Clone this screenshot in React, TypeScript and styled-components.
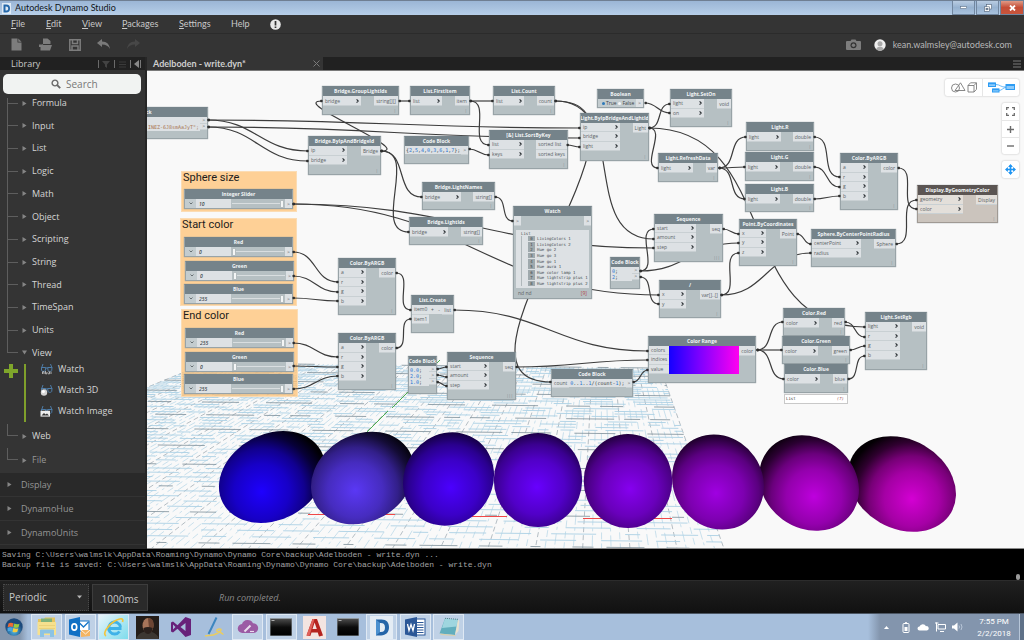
import React from "react";
import styled, { createGlobalStyle, css } from "styled-components";

const GlobalStyle = createGlobalStyle`
  * { box-sizing: border-box; }
  html, body { margin: 0; background: #000; }
  body { font-family: "Open Sans", "Noto Sans", sans-serif; color: #c8c8c8; overflow: hidden; }
  button, input, select { font: inherit; color: inherit; margin: 0; padding: 0; border: 0; background: none; border-radius: 0; }
  a { color: inherit; text-decoration: none; }
  ul { list-style: none; margin: 0; padding: 0; }
  svg { display: block; }
`;

/* ------------------------------------------------------------ shell */

const Shell = styled.div`
  display: flex;
  flex-direction: column;
  height: 100vh;
`;

const TitleBar = styled.header`
  display: flex;
  align-items: center;
  height: 15px;
  padding-left: 2px;
  border-top: 1px solid #6f7f93;
  background: linear-gradient(#9bb6d6, #b6cee8);
`;

const AppTitle = styled.h1`
  flex: 1;
  margin: 0 0 0 4px;
  font: 400 9px/14px Lato, sans-serif;
  color: #101418;
`;

const WindowButton = styled.button<{ $close?: boolean }>`
  display: grid;
  place-items: center;
  align-self: stretch;
  width: ${(p) => (p.$close ? 24 : 23)}px;
  border: 1px solid #71869f;
  border-top: 0;
  margin-left: 1px;
  background: ${(p) =>
    p.$close ? "linear-gradient(#e09a86, #c44d36 50%, #c8553c)" : "linear-gradient(#b9cce2, #97b2d0 50%, #a9c2de)"};
`;

const MenuBar = styled.nav`
  display: flex;
  align-items: center;
  height: 18px;
  padding-left: 11px;
  background: #343434;
  font: 9px Lato, "Open Sans", sans-serif;
`;

const MenuItem = styled.button<{ $w: number }>`
  width: ${(p) => p.$w}px;
  height: 18px;
  text-align: left;
  line-height: 16px;
`;

const ToolBar = styled.div`
  display: flex;
  align-items: center;
  gap: 8px;
  height: 24px;
  padding: 0 12px 2px 6px;
  background: #343434;
  border-top: 1px solid #2b2b2b;
`;

const ToolButton = styled.button`
  display: grid;
  place-items: center;
  width: 21px;
  height: 20px;
`;

const Spacer = styled.div`
  flex: 1;
`;

const Account = styled.a`
  display: flex;
  align-items: center;
  gap: 7px;
  margin-left: 2px;
  font: 9px Lato, "Open Sans", sans-serif;
  color: #b8b8b8;
`;

const Main = styled.main`
  display: grid;
  grid-template-columns: 147px minmax(0, 1fr);
  flex: 1;
  min-height: 0;
`;

/* ---------------------------------------------------------- library */

const Sidebar = styled.aside`
  display: flex;
  flex-direction: column;
  min-height: 0;
  overflow: hidden;
  background: #343434;
  border-right: 2px solid #262626;
  font-size: 9px;
`;

const LibraryHeader = styled.div`
  display: flex;
  align-items: center;
  gap: 4px;
  height: 13px;
  padding: 0 3px 0 11px;
  background: #212121;
`;

const LibraryTitle = styled.h2`
  flex: 1;
  margin: 0;
  font-size: 9px;
  font-weight: 400;
  line-height: 12px;
`;

const HeaderButton = styled.button`
  display: grid;
  place-items: center;
  height: 9px;
`;

const SearchLabel = styled.label`
  display: flex;
  align-items: center;
  gap: 5px;
  height: 20px;
  margin: 4px 4px 2px 3px;
  padding-left: 48px;
  border-radius: 5px;
  background: #f1f3f2;
  color: #6b6b6b;
`;

const SearchInput = styled.input`
  width: 60px;
  font-size: 10px;
  outline: none;
  &::placeholder { color: #777; opacity: 1; }
`;

const Tree = styled.ul`
  position: relative;
  display: flex;
  flex-direction: column;
  justify-content: space-between;
  height: 264px;
  &::before {
    content: "";
    position: absolute;
    left: 7px;
    top: 2px;
    bottom: 7px;
    border-left: 1px solid #5e5e5e;
  }
`;

const TreeItem = styled.li`
  display: flex;
  align-items: center;
  height: 14px;
  padding-left: 8px;
`;

const Tick = styled.span`
  width: 10px;
  height: 1px;
  margin-right: 4px;
  background: #5e5e5e;
`;

const TreeButton = styled.button<{ $dim?: boolean }>`
  display: flex;
  align-items: center;
  gap: 5px;
  line-height: 14px;
  color: ${(p) => (p.$dim ? "#969696" : "#d4d4d4")};
`;

const Leaves = styled.div`
  display: flex;
  gap: 6px;
  padding-left: 4px;
`;

const LeafList = styled.ul`
  flex: 1;
  border-left: 2px solid #7f9f2b;
  margin: 4px 0 0 0;
  height: 58px;
`;

const Leaf = styled.li`
  display: flex;
  align-items: center;
  height: 21px;
  padding-left: 14px;
`;

const LeafButton = styled.button`
  display: flex;
  align-items: center;
  gap: 5px;
  line-height: 14px;
  color: #d4d4d4;
  margin-top: -12px;
`;

const Stub = styled.div`
  display: flex;
  align-items: flex-end;
  height: 24px;
  padding: 0 0 3px 7px;
`;

const Elbow = styled.span`
  width: 11px;
  height: 12px;
  margin: 0 4px 7px 0;
  border: solid #5e5e5e;
  border-width: 0 0 1px 1px;
`;

const Packages = styled.ul`
  flex: 1;
  margin-top: 3px;
  background: #292929;
`;

const PackageItem = styled.li`
  display: flex;
  align-items: center;
  height: 24px;
  padding-left: 7px;
  border-bottom: 1px solid #333;
  button { gap: 9px; }
`;

/* -------------------------------------------------------- workspace */

const WorkArea = styled.section`
  display: flex;
  flex-direction: column;
  min-width: 0;
  min-height: 0;
`;

const TabBar = styled.div`
  display: flex;
  align-items: center;
  height: 14px;
  border-bottom: 1px solid #7a7a7a;
  background: #212121;
`;

const Tab = styled.div`
  display: flex;
  align-items: center;
  justify-content: space-between;
  width: 176px;
  height: 13px;
  padding: 0 3px 0 6px;
  background: #343434;
  font: 700 9px/12px Lato, "Open Sans", sans-serif;
  color: #cfcfcf;
`;

const TabMenu = styled.button`
  margin: 0 3px 0 auto;
`;

const Canvas = styled.div`
  position: relative;
  flex: 1;
  overflow: hidden;
  background: #f9f9f9;
  border-bottom: 1px solid #8a8a8a;
`;

const Plane = styled.div`
  position: absolute;
  left: 0;
  top: 0;
  width: 1024px;
  height: 640px;
  transform: translate(-147px, -71px);
  font-size: 5px;
  line-height: 8px;
  color: #5a6165;
`;

const Backdrop = styled.svg`
  position: absolute;
  left: 0;
  top: 0;
`;

type Box = { $x: number; $y: number; $w: number; $h: number };

const placed = css<Box>`
  position: absolute;
  left: ${(p) => p.$x}px;
  top: ${(p) => p.$y}px;
  width: ${(p) => p.$w}px;
  height: ${(p) => p.$h}px;
`;

const GroupBox = styled.section<Box>`
  ${placed}
  border: 1px solid #fbdcb4;
  background: rgba(255, 196, 122, 0.78);
`;

const GroupTitle = styled.h3`
  margin: 0;
  padding-left: 1px;
  font: 400 11px/11px Roboto, sans-serif;
  color: #1c1c1c;
`;

const NodeBox = styled.article<Box & { $warm?: boolean }>`
  ${placed}
  display: flex;
  flex-direction: column;
  overflow: hidden;
  border: 1px solid ${(p) => (p.$warm ? "#a09a94" : "#98a3a7")};
  border-top-color: ${(p) => (p.$warm ? "#5b5553" : "#75838a")};
  background: ${(p) => (p.$warm ? "#cbc4bd" : "#b6c0c3")};
  box-shadow: 0 0 1px #8b969a;
  --cell: ${(p) => (p.$warm ? "#e3dfda" : "#dde1e4")};
  --head: ${(p) => (p.$warm ? "#5b5553" : "#75838a")};
`;

const NodeTitle = styled.h4`
  display: flex;
  justify-content: center;
  flex: none;
  height: 9px;
  margin: 0;
  background: var(--head);
  color: #f2f5f6;
  font-size: 5px;
  font-weight: 700;
  line-height: 8px;
  white-space: nowrap;
`;

const Body = styled.div`
  display: flex;
  justify-content: space-between;
  align-items: flex-start;
  flex: 1;
`;

const Inputs = styled.ul<{ $w?: number; $h: number }>`
  display: flex;
  flex-direction: column;
  width: ${(p) => (p.$w ? `${p.$w}px` : "auto")};
  height: ${(p) => p.$h}px;
`;

const Outputs = styled(Inputs)`
  text-align: right;
`;

const Port = styled.li`
  display: flex;
  justify-content: space-between;
  align-items: center;
  flex: 1;
  min-height: 0;
  padding: 0 2px;
  background: var(--cell);
  border-bottom: 1px solid #c9d0d3;
  white-space: nowrap;
  line-height: 6px;
`;

const Lacing = styled.span`
  position: absolute;
  right: 2px;
  bottom: 1px;
  font-size: 4px;
  line-height: 5px;
  color: #7d888c;
`;

const Code = styled.pre<{ $tone?: string }>`
  flex: 1;
  margin: 0;
  padding: 1px;
  background: var(--cell);
  font: 5px/6px "DejaVu Sans Mono", monospace;
  color: ${(p) => p.$tone ?? "#383e41"};
  text-align: ${(p) => (p.$tone ? "right" : "left")};
`;

const Num = styled.span`
  color: #1f74d2;
`;

const SliderRow = styled.div`
  display: grid;
  grid-template-columns: 11px 35px 1fr 7px;
  flex: 1;
`;

const Cell = styled.div`
  display: grid;
  place-items: center;
  background: var(--cell);
`;

const ArrowButton = styled.button`
  display: grid;
  place-items: center;
  background: #c3cccf;
`;

const ValueInput = styled.input`
  min-width: 0;
  padding-left: 3px;
  background: var(--cell);
  font-size: 5px;
  font-style: italic;
  font-weight: 600;
  color: #40474a;
`;

const Range = styled.input`
  appearance: none;
  align-self: center;
  min-width: 0;
  height: 8px;
  margin: 0 1px;
  background: linear-gradient(#d9dee0, #d9dee0) center / 100% 1px no-repeat;
  &::-webkit-slider-thumb {
    appearance: none;
    width: 4px;
    height: 8px;
    background: #f4f6f6;
    border: 1px solid #b4bcbf;
  }
`;

const Radio = styled.input`
  appearance: none;
  width: 3px;
  height: 3px;
  margin: 0 1px 0 0;
  border-radius: 50%;
  background: #f5f7f8;
  &:checked { background: #2d78b8; }
`;

const BooleanRow = styled.div`
  display: flex;
  align-items: center;
  justify-content: space-between;
  flex: 1;
  padding-left: 4px;
  background: #c3cccf;
  label { display: flex; align-items: center; color: #3c4346; }
  ${Cell} { width: 7px; height: 8px; }
`;

const SmallButton = styled.button`
  width: 8px;
  height: 9px;
  background: var(--cell);
  line-height: 8px;
`;

const Swatch = styled.div`
  flex: 1;
  height: 28px;
  background: linear-gradient(90deg, #1400ff, #8000ff 45%, #ff00f0);
`;

const WatchPanel = styled.div`
  margin: 1px 2px 0;
  height: 58px;
  padding: 1px 0 0 5px;
  background: var(--cell);
  font: 4px/5px "DejaVu Sans Mono", monospace;
  color: #464d51;
`;

const WatchList = styled.ul`
  display: flex;
  flex-direction: column;
  justify-content: space-between;
  height: 50px;
  padding-left: 6px;
  border-left: 1px solid #b0b8bb;
`;

const WatchItem = styled.li`
  display: flex;
  gap: 2px;
  white-space: nowrap;
  b { font-weight: 400; background: #9fa9ad; color: #3f474a; height: 5px; width: 7px; text-align: center; }
`;

const WatchFooter = styled.div`
  display: flex;
  justify-content: space-between;
  padding: 2px 4px;
  line-height: 6px;
  em { font-style: normal; color: #b0474a; }
`;

const Preview = styled.div<Box>`
  ${placed}
  display: flex;
  justify-content: space-between;
  padding: 0 3px 0 1px;
  border: 1px solid #c9c9c9;
  background: #fff;
  font: 4px/8px "DejaVu Sans Mono", monospace;
  color: #333;
  em { color: #a05a5a; }
`;

const ViewTools = styled.div`
  position: absolute;
  top: 8px;
  right: 5px;
  display: flex;
  flex-direction: column;
  align-items: flex-end;
  gap: 7px;
`;

const ToolCard = styled.div<{ $row?: boolean }>`
  display: flex;
  flex-direction: ${(p) => (p.$row ? "row" : "column")};
  border-radius: 2px;
  background: #fff;
  box-shadow: 0 0 2px #b5b5b5;
  & > * + * { border-${(p) => (p.$row ? "left" : "top")}: 1px solid #e6e6e6; }
`;

const ViewButton = styled.button<{ $wide?: boolean }>`
  display: grid;
  place-items: center;
  width: ${(p) => (p.$wide ? 37 : 17)}px;
  height: 17px;
`;

/* -------------------------------------------------------- bottom bars */

const Console = styled.section`
  position: relative;
  height: 31px;
  padding: 1px 2px;
  background: #000;
  font: 8px/10px "Liberation Mono", monospace;
  color: #a4a4a4;
  white-space: nowrap;
  p { margin: 0; }
`;

const Grip = styled.span`
  position: absolute;
  right: 4px;
  bottom: 0;
  width: 4px;
  height: 6px;
  border-radius: 2px;
  background: #9a9a9a;
`;

const RunBar = styled.footer`
  display: flex;
  align-items: center;
  gap: 4px;
  height: 34px;
  padding-left: 3px;
  border-top: 1px solid #2c2c2c;
  border-bottom: 1px solid #4b5562;
  background: linear-gradient(#202020, #111);
  font-size: 10px;
`;

const SelectWrap = styled.label`
  position: relative;
  svg { position: absolute; right: 7px; top: 11px; pointer-events: none; }
`;

const RunMode = styled.select`
  appearance: none;
  width: 86px;
  height: 27px;
  padding-left: 5px;
  border: 1px dotted #4a4a4a;
  background: #2a2a2a;
`;

const Interval = styled.button`
  width: 56px;
  height: 27px;
  padding-top: 3px;
  border: 1px solid #3d3d3d;
  background: #2a2a2a;
  margin-left: -1px;
`;

const RunStatus = styled.output`
  margin-left: 67px;
  font-size: 9px;
  font-style: italic;
  color: #8a8a8a;
`;

const TaskBar = styled.nav`
  display: flex;
  height: 26px;
  background: #a7bfdc;
`;

const StartButton = styled.button`
  display: grid;
  place-items: center;
  width: 28px;
  margin-right: 3px;
  background: linear-gradient(90deg, #8496ad 70%, #a7bfdc);
`;

const Dock = styled.div`
  display: flex;
  justify-content: space-between;
  width: 433px;
`;

const DockItem = styled.button<{ $open?: boolean; $active?: boolean }>`
  display: grid;
  place-items: center;
  width: 31px;
  height: 26px;
  border: 1px solid ${(p) => (p.$open ? "#dfe9f4" : "transparent")};
  background: ${(p) => (p.$active ? "linear-gradient(135deg,#e8f4fb,#7fdcec)" : p.$open ? "#bfd1e6" : "none")};
`;

const Tray = styled.div`
  display: flex;
  align-items: center;
  gap: 5px;
  margin-left: auto;
  padding-left: 12px;
  background: linear-gradient(90deg, #a7bfdc, #8395ad 12px);
  color: #fff;
  font: 8px/12px Roboto, sans-serif;
  text-align: center;
`;

const TrayButton = styled.button`
  display: grid;
  place-items: center;
  width: 12px;
  &:first-child { margin-right: 3px; }
`;

const Clock = styled.time`
  width: 40px;
  margin: 1px 0 0 6px;
`;

const ShowDesktop = styled.button`
  align-self: stretch;
  width: 5px;
  background: #5f7188;
  border-left: 1px solid #b7c6d8;
`;

/* --------------------------------------------------------------- data */

type NodeData = {
  x: number; y: number; w: number; h: number; title: string;
  inputs: string[]; inW: number; outputs: string[]; lacing?: string; warm?: boolean;
};

const n = (
  title: string, x: number, y: number, w: number, h: number,
  inputs: string[], inW: number, outputs: string[], extra: Partial<NodeData> = {}
): NodeData => ({ title, x, y, w, h, inputs, inW, outputs, ...extra });

const nodes: NodeData[] = [
  n("Bridge.GroupLightIds", 322, 86, 77, 29, ["bridge"], 38, ["string[][]"]),
  n("List.FirstItem", 410, 86, 60, 29, ["list"], 31, ["item"]),
  n("List.Count", 493, 86, 62, 29, ["list"], 30, ["count"]),
  n("Bridge.ByIpAndBridgeId", 308, 136, 73, 39, ["ip", "bridge"], 38, ["Bridge"]),
  n("[&] List.SortByKey", 489, 130, 79, 39, ["list", "keys"], 34, ["sorted list", "sorted keys"]),
  n("Light.ByIpBridgeAndLightId", 580, 113, 69, 48, ["ip", "bridge", "light"], 39, ["Light"]),
  n("Light.SetOn", 670, 89, 62, 38, ["light", "on"], 33, ["void"]),
  n("Light.RefreshData", 658, 153, 60, 29, ["light"], 34, ["var"]),
  n("Light.R", 746, 122, 68, 29, ["light"], 34, ["double"]),
  n("Light.G", 745, 152, 69, 29, ["light"], 34, ["double"]),
  n("Light.B", 745, 184, 69, 28, ["light"], 34, ["double"]),
  n("Color.ByARGB", 840, 153, 58, 57, ["a", "r", "g", "b"], 27, ["color"]),
  n("Display.ByGeometryColor", 917, 185, 81, 38, ["geometry", "color"], 45, ["Display"], { warm: true }),
  n("Bridge.LightNames", 422, 182, 73, 28, ["bridge"], 38, ["string[]"]),
  n("Bridge.LightIds", 409, 217, 74, 28, ["bridge"], 38, ["string[]"]),
  n("Sequence", 654, 214, 69, 48, ["start", "amount", "step"], 41, ["seq"], { lacing: "|||" }),
  n("Point.ByCoordinates", 739, 219, 58, 47, ["x", "y", "z"], 26, ["Point"]),
  n("Sphere.ByCenterPointRadius", 811, 229, 85, 38, ["centerPoint", "radius"], 49, ["Sphere"]),
  n("/", 659, 280, 62, 38, ["x", "y"], 26, ["var[]..[]"]),
  n("Color.ByARGB", 338, 258, 58, 57, ["a", "r", "g", "b"], 27, ["color"]),
  n("Color.ByARGB", 338, 333, 58, 57, ["a", "r", "g", "b"], 27, ["color"]),
  n("Sequence", 447, 352, 69, 48, ["start", "amount", "step"], 41, ["seq"], { lacing: "|||" }),
  n("Color.Red", 783, 308, 62, 28, ["color"], 35, ["red"]),
  n("Color.Green", 782, 336, 68, 28, ["color"], 35, ["green"]),
  n("Color.Blue", 784, 364, 64, 29, ["color"], 35, ["blue"]),
  n("Light.SetRgb", 865, 312, 62, 58, ["light", "r", "g", "b"], 34, ["void"]),
];

const wires: [number, number, number, number][] = [
  [208, 120, 580, 128], [208, 120, 308, 151], [208, 127, 580, 138], [208, 127, 308, 161],
  [381, 151, 322, 101], [381, 151, 422, 197], [381, 151, 409, 232],
  [399, 101, 410, 101], [470, 101, 493, 101], [470, 101, 489, 145], [469, 149, 489, 155],
  [567, 145, 580, 147], [555, 101, 654, 239], [555, 101, 551, 382], [495, 197, 513, 221],
  [645, 103, 670, 113], [649, 128, 670, 104], [649, 128, 658, 168], [649, 128, 865, 327],
  [719, 168, 746, 137], [719, 168, 745, 167], [719, 168, 745, 199],
  [814, 137, 840, 177], [814, 167, 840, 187], [814, 199, 840, 196],
  [898, 168, 917, 209], [896, 244, 917, 200], [723, 229, 739, 234], [797, 234, 811, 244],
  [293, 204, 654, 248], [293, 204, 659, 295], [640, 271, 654, 229], [640, 271, 739, 243],
  [640, 277, 659, 304], [721, 295, 739, 253], [721, 295, 811, 253],
  [293, 252, 338, 282], [293, 276, 338, 292], [293, 298, 338, 301],
  [293, 343, 338, 357], [293, 366, 338, 367], [293, 389, 338, 376],
  [396, 273, 411, 310], [396, 348, 411, 319], [454, 310, 648, 351],
  [437, 369, 447, 367], [437, 375, 447, 377], [437, 382, 447, 386],
  [516, 367, 648, 360], [633, 382, 648, 370],
  [757, 350, 783, 322], [757, 350, 782, 350], [757, 350, 784, 379],
  [845, 322, 865, 337], [850, 350, 865, 346], [848, 379, 865, 356],
];

const wirePath = ([x1, y1, x2, y2]: [number, number, number, number]) => {
  const reach = 0.45 * Math.hypot(x2 - x1, y2 - y1);
  return `M${x1} ${y1}C${x1 + reach} ${y1} ${x2 - reach} ${y2} ${x2} ${y2}`;
};

const groups = [
  { title: "Sphere size", x: 181, y: 171, w: 116, h: 41 },
  { title: "Start color", x: 180, y: 218, w: 117, h: 88 },
  { title: "End color", x: 181, y: 309, w: 117, h: 88 },
];

const sliders = [
  { title: "Integer Slider", x: 184, y: 189, value: "10", pos: 100 },
  { title: "Red", x: 184, y: 237, value: "0", pos: 0 },
  { title: "Green", x: 185, y: 261, value: "0", pos: 0 },
  { title: "Blue", x: 184, y: 284, value: "255", pos: 100 },
  { title: "Red", x: 185, y: 328, value: "255", pos: 100 },
  { title: "Green", x: 185, y: 352, value: "0", pos: 0 },
  { title: "Blue", x: 184, y: 374, value: "255", pos: 100 },
];

/* center, radii, tilt, highlight and colour, listed back to front */
const spheres = [
  { cx: 272, cy: 477, rx: 55.6, ry: 42.9, a: -28, hx: 256, hy: 485, c: [30, 0, 255] },
  { cx: 362.5, cy: 478, rx: 53.9, ry: 43.5, a: -30, hx: 350, hy: 485, c: [90, 56, 245] },
  { cx: 448.5, cy: 479, rx: 48.1, ry: 44, a: -53, hx: 443, hy: 486, c: [75, 0, 255] },
  { cx: 902, cy: 484, rx: 56.8, ry: 44.4, a: 30, hx: 918, hy: 492, c: [212, 0, 212] },
  { cx: 809, cy: 483, rx: 52.4, ry: 45, a: 36, hx: 821, hy: 491, c: [190, 0, 222] },
  { cx: 718, cy: 482, rx: 49, ry: 44.4, a: 55, hx: 726, hy: 490, c: [160, 0, 226] },
  { cx: 628, cy: 481, rx: 44.3, ry: 47, a: 0, hx: 630, hy: 489, c: [134, 0, 240] },
  { cx: 538, cy: 480, rx: 44.2, ry: 47, a: 0, hx: 537, hy: 487, c: [104, 0, 255] },
];

/* -------------------------------------------------------------- drawing */

const VX = 601;
const VY = 199;
const tilt = (x: number, y: number) => y + (x - 560) * 0.011;

const gridLines = (() => {
  const out: { d: string; major: boolean; dash: string; col: boolean }[] = [];
  let seed = 7;
  const rnd = () => (seed = (seed * 16807) % 2147483647) / 2147483647;
  for (let i = 0; i <= 100; i++) {
    const k = -2.353 + (2.7066 * i) / 100;
    const x1 = VX + k * 168;
    const x2 = VX + k * 360;
    const major = i % 5 === 0;
    out.push({
      d: `M${x1.toFixed(1)} ${tilt(x1, VY + 168).toFixed(1)}L${x2.toFixed(1)} ${tilt(x2, VY + 360).toFixed(1)}`,
      major, col: true, dash: major ? "5 3" : i % 2 ? "7 4" : "11 3 3 4",
    });
  }
  for (let i = -5; i <= 50; i++) {
    const d = (317 * 56.4) / (56.4 + i);
    const x1 = VX - 2.353 * d;
    const x2 = VX + 0.3536 * d;
    const major = i % 5 === 0;
    const dash = Array.from({ length: 8 }, (_, j) => Math.round(j % 2 ? 8 + rnd() * 26 : 10 + rnd() * 38)).join(" ");
    out.push({
      d: `M${x1.toFixed(1)} ${tilt(x1, VY + d).toFixed(1)}L${x2.toFixed(1)} ${tilt(x2, VY + d).toFixed(1)}`,
      major, col: false, dash,
    });
  }
  return out;
})();

const shade = (c: number[], f: number) => `rgb(${c.map((v) => Math.round(v * f)).join(",")})`;

const Scene = () => (
  <Backdrop width="1024" height="640" viewBox="0 0 1024 640" aria-hidden="true">
    <defs>
      {spheres.map((s, i) => (
        <radialGradient key={i} id={`ball${i}`} gradientUnits="userSpaceOnUse" cx={s.hx} cy={s.hy} r="69">
          <stop offset="0" stopColor={shade(s.c, 1)} />
          <stop offset="0.12" stopColor={shade(s.c, 0.93)} />
          <stop offset="0.4" stopColor={shade(s.c, 0.78)} />
          <stop offset="0.62" stopColor={shade(s.c, 0.56)} />
          <stop offset="0.82" stopColor={shade(s.c, 0.22)} />
          <stop offset="1" stopColor={shade(s.c, 0.02)} />
        </radialGradient>
      ))}
    </defs>
    <g fill="none">
      {gridLines.map((l, i) => (
        <path
          key={i}
          d={l.d}
          stroke={l.major ? "#7d8e98" : "#acd0e4"}
          strokeWidth={l.col ? 0.7 : 1}
          strokeDasharray={l.dash}
          opacity={l.major ? 0.8 : 0.9}
        />
      ))}
      <path d="M440 360 392 408M388 411 367 432" stroke="#4caf50" />
      <path d="M308 514.5H395M472 516.500H507M583 518.500H672" stroke="#f04848" />
    </g>
    {spheres.map((s, i) => (
      <ellipse key={i} cx={s.cx} cy={s.cy} rx={s.rx} ry={s.ry} transform={`rotate(${s.a} ${s.cx} ${s.cy})`} fill={`url(#ball${i})`} />
    ))}
  </Backdrop>
);

const Wires = () => (
  <Backdrop width="1024" height="640" viewBox="0 0 1024 640" aria-hidden="true">
    {wires.map((w, i) => (
      <path key={i} d={wirePath(w)} fill="none" stroke="#3c3c3c" strokeWidth="1.2" />
    ))}
  </Backdrop>
);

const Pins = () => (
  <Backdrop width="1024" height="640" viewBox="0 0 1024 640" aria-hidden="true" pointerEvents="none">
    {wires.map(([a, b, c, d], i) => (
      <g key={i} fill="#2e2e2e">
        <rect x={a - 0.5} y={b - 1.2} width="2.400" height="2.400" rx="0.8" />
        <rect x={c - 1.8} y={d - 1.2} width="2.400" height="2.400" rx="0.8" />
      </g>
    ))}
  </Backdrop>
);

const Chevron = () => (
  <svg width="3" height="4" viewBox="0 0 3 4"><path d="M.6.4 2.300 2 .6 3.600" fill="none" stroke="#22282b" strokeWidth="1.1" /></svg>
);

const portHeight = [0, 10, 19, 28, 38];

const GraphNode = ({ d }: { d: NodeData }) => (
  <NodeBox $x={d.x} $y={d.y} $w={d.w} $h={d.h} $warm={d.warm}>
    <NodeTitle>{d.title}</NodeTitle>
    <Body>
      <Inputs $w={d.inW} $h={portHeight[d.inputs.length]}>
        {d.inputs.map((p) => <Port key={p}><span>{p}</span><Chevron /></Port>)}
      </Inputs>
      <Outputs $h={portHeight[d.outputs.length]}>
        {d.outputs.map((p) => <Port key={p}>{p}</Port>)}
      </Outputs>
    </Body>
    <Lacing>{d.lacing ?? "|"}</Lacing>
  </NodeBox>
);

const SliderNode = ({ s }: { s: (typeof sliders)[number] }) => (
  <NodeBox $x={s.x} $y={s.y} $w={109} $h={20}>
    <NodeTitle>{s.title}</NodeTitle>
    <SliderRow>
      <ArrowButton aria-label="Slider range">
        <svg width="4" height="3" viewBox="0 0 4 3"><path d="M.5.5 2 2 3.500.5" fill="none" stroke="#4f585c" strokeWidth=".8" /></svg>
      </ArrowButton>
      <ValueInput aria-label={`${s.title} value`} defaultValue={s.value} />
      <Range type="range" aria-label={s.title} defaultValue={s.pos} />
      <Cell>&gt;</Cell>
    </SliderRow>
  </NodeBox>
);

type CodeProps = Box & { rows: number; title?: string; input?: string; tone?: string; children: React.ReactNode };

const CodeNode = ({ rows, title = "Code Block", input, tone, children, ...box }: CodeProps) => {
  const h = rows === 1 ? 9 : rows * 6 + 1;
  return (
    <NodeBox {...box}>
      <NodeTitle>{title}</NodeTitle>
      <Body>
        {input && <Inputs $h={h}><Port>{input}</Port></Inputs>}
        <Code $tone={tone}>{children}</Code>
        <Outputs $h={h}>
          {Array.from({ length: rows }, (_, i) => <Port key={i}>&gt;</Port>)}
        </Outputs>
      </Body>
    </NodeBox>
  );
};

const watched = [
  "LivingColors 1", "LivingColors 2", "Hue go 2", "Hue go 3", "Hue go 1",
  "Hue aura 1", "Hue color lamp 1", "Hue lightstrip plus 1", "Hue lightstrip plus 2",
];

const numbered = (src: string) =>
  src.split(/(\d+(?:\.\d+)?)/).map((t, i) => (i % 2 ? <Num key={i}>{t}</Num> : t));

const Graph = () => (
  <Plane>
    <Scene />
    {groups.map((g) => (
      <GroupBox key={g.title} $x={g.x} $y={g.y} $w={g.w} $h={g.h}><GroupTitle>{g.title}</GroupTitle></GroupBox>
    ))}
    <Wires />
    {sliders.map((s, i) => <SliderNode key={i} s={s} />)}
    {nodes.map((d, i) => <GraphNode key={i} d={d} />)}

    <CodeNode $x={68} $y={107} $w={140} $h={32} rows={2} tone="#a87550">{"\n"}INEZ-6J8smAaJyT";</CodeNode>
    <CodeNode $x={404} $y={136} $w={65} $h={28} rows={1}>{numbered("{2,5,4,0,3,6,1,7};")}</CodeNode>
    <CodeNode $x={610} $y={257} $w={30} $h={32} rows={2}>{numbered("0;\n2;")}</CodeNode>
    <CodeNode $x={408} $y={356} $w={29} $h={38} rows={3}>{numbered("0.0;\n2.0;\n1.0;")}</CodeNode>
    <CodeNode $x={551} $y={369} $w={82} $h={28} rows={1} input="count">
      <Num>0</Num>..<Num>1</Num>..<Num>1</Num>/(count-<Num>1</Num>);
    </CodeNode>

    <NodeBox $x={597} $y={89} $w={47} $h={19}>
      <NodeTitle>Boolean</NodeTitle>
      <BooleanRow>
        <label><Radio type="radio" name="bool" defaultChecked />True</label>
        <label><Radio type="radio" name="bool" />False</label>
        <Cell>&gt;</Cell>
      </BooleanRow>
    </NodeBox>

    <NodeBox $x={411} $y={295} $w={43} $h={38}>
      <NodeTitle>List.Create</NodeTitle>
      <Body>
        <Inputs $h={19} $w={17}><Port>item0</Port><Port>item1</Port></Inputs>
        <SmallButton>+</SmallButton>
        <SmallButton>-</SmallButton>
        <Outputs $h={10}><Port>list</Port></Outputs>
      </Body>
    </NodeBox>

    <NodeBox $x={513} $y={206} $w={79} $h={93}>
      <NodeTitle>Watch</NodeTitle>
      <Body>
        <Inputs $h={10}><Port>&gt;</Port></Inputs>
        <Outputs $h={10}><Port>&gt;</Port></Outputs>
      </Body>
      <WatchPanel>
        List
        <WatchList>
          {watched.map((t, i) => <WatchItem key={t}><b>{i}</b>{t}</WatchItem>)}
        </WatchList>
      </WatchPanel>
      <WatchFooter><span>nd nd</span><em>[9]</em></WatchFooter>
    </NodeBox>

    <NodeBox $x={648} $y={336} $w={108} $h={47}>
      <NodeTitle>Color Range</NodeTitle>
      <Body>
        <Inputs $h={28} $w={20}><Port>colors</Port><Port>indices</Port><Port>value</Port></Inputs>
        <Swatch />
        <Outputs $h={10}><Port>color</Port></Outputs>
      </Body>
    </NodeBox>
    <Preview $x={784} $y={394} $w={64} $h={10}><span>List</span><em>(7)</em></Preview>
    <Pins />
  </Plane>
);

/* ---------------------------------------------------------------- icons */

const Caret = ({ open }: { open?: boolean }) => (
  <svg width="5" height="5" viewBox="0 0 5 5"><path d={open ? "M0 .5h5L2.500 4.500z" : "M.5 0v5L4.500 2.500z"} fill="#858585" /></svg>
);

const Glasses = ({ kind }: { kind: string }) => (
  <svg width="13" height="13" viewBox="0 0 13 13" fill="none">
    <path d="M3 2 1.500 6M10.500 2 12 6" stroke="#4d7ba6" />
    <path d="M1.500 5.500h4.300l-.5 3q-.3.800-1.300.8H2.800q-1 0-1.300-1zM7.700 5.500H12l-.3 3q-.3.800-1.300.8H9.300q-1 0-1.300-1zM5.800 6h2" stroke="#4d7ba6" />
    {kind === "text" && <path d="M2.500 12V9.800H4V12M5.500 9v2.800H7V10M8 11.800h1.500V9.800H8.500M11 12V9.500" stroke="#cfcfcf" strokeWidth=".8" />}
    {kind === "3d" && <><circle cx="4" cy="9.500" r="3.200" fill="#d4d4d4" /><circle cx="3.400" cy="8.600" r="1.500" fill="#fff" /></>}
    {kind === "image" && <><rect x=".5" y="6.800" width="9.500" height="5.800" fill="#eee" /><path d="M1.500 11.500 4 9l1.500 1.500L7 9.500l2 2z" fill="#333" /></>}
  </svg>
);

const Cmd = () => (
  <svg width="22" height="18" viewBox="0 0 22 18">
    <defs><linearGradient id="cmd" x2="0" y2="1"><stop stopColor="#4a4a4a" /><stop offset=".5" stopColor="#0b0b0b" /><stop offset="1" stopColor="#000" /></linearGradient></defs>
    <rect width="22" height="18" fill="#8f989f" /><rect x=".5" y="1" width="21" height="16.500" fill="url(#cmd)" />
    <path d="M1.500 2.500h3" stroke="#ddd" strokeWidth=".7" />
  </svg>
);

const DockIcons: { name: string; open?: boolean; active?: boolean; art: React.ReactNode }[] = [
  { name: "File Explorer", open: true, art: (
    <svg width="22" height="22" viewBox="0 0 22 22"><path d="M2 3h6l1-1.500h10V19H2z" fill="#e6c560" /><path d="M5 2.500h11v5H5z" fill="#7fb27c" /><path d="M1.500 6H20v13H1.500z" fill="#f6e08e" /><path d="M3 9.500h16M3 12.500h16" stroke="#ecd27a" /><path d="M4 21v-6.500q0-1 1-1h12q1 0 1 1V21h-4v-3.500H8V21z" fill="#8cc3e3" /></svg>) },
  { name: "Outlook", open: true, art: (
    <svg width="24" height="22" viewBox="0 0 24 22"><rect x="10" y="5" width="11" height="10" fill="#fff" stroke="#1475c8" /><path d="M10.500 6 15.500 11l5-5" fill="none" stroke="#1475c8" strokeWidth="1.300" /><path d="M1 3.500 12 1v20L1 18.500z" fill="#1070c4" /><ellipse cx="6.300" cy="11" rx="2.400" ry="3.200" fill="none" stroke="#fff" strokeWidth="1.700" /><path d="M13 14h9v6l-9 1z" fill="#f4b562" /><path d="m13 14 4.500 4 4.500-4" fill="none" stroke="#fff" strokeWidth=".8" /></svg>) },
  { name: "Internet Explorer", open: true, active: true, art: (
    <svg width="22" height="22" viewBox="0 0 22 22" fill="none"><path d="M18.500 12.500H7M16.500 15.500a6 6 0 1 1 1-4.500" stroke="#3fb2e8" strokeWidth="3" /><path d="M3 20c-4-2 2-11 8-14.500S21 1.500 19.500 6" stroke="#f2c53d" strokeWidth="1.700" /></svg>) },
  { name: "Portrait", art: (
    <svg width="23" height="23" viewBox="0 0 23 23"><rect width="23" height="23" fill="#241d19" /><path d="M0 23c2-5 5-6 7-7h9c3 1 6 3 7 7z" fill="#3c3732" /><ellipse cx="12" cy="9.500" rx="5.500" ry="7.500" fill="#a8755a" /><path d="M12 2c5 0 6 4 5.500 8-.5 4-2 6.500-4 7z" fill="#6e4634" /><path d="M7.500 12q4.500-2 9 0c0 3-2 6-4.500 6s-4.500-3-4.500-6z" fill="#2b211d" /></svg>) },
  { name: "Visual Studio", art: (
    <svg width="22" height="22" viewBox="0 0 22 22"><path d="M1 6.500 3 5.500l4.500 3.800L15.500 1 21 3v16l-5.500 2-8-8.300L3 16.500l-2-1zM15.500 7 10.500 11l5 4zM3 8.500v5l2.500-2.500z" fill="#68217a" fillRule="evenodd" /></svg>) },
  { name: "Pen", art: (
    <svg width="22" height="22" viewBox="0 0 22 22" fill="none"><path d="M2 20c3-1 7 .5 12-2.500 5-2.500 5-5 2-4.500s-3 2.500 0 3 3.500 2.500 4.500 2" stroke="#e9cd63" strokeWidth="1.600" /><path d="M13.500 1.500 8 13l-2.500 5" stroke="#3c86c0" strokeWidth="2" /></svg>) },
  { name: "Cloud", open: true, art: (
    <svg width="22" height="18" viewBox="0 0 22 18"><path d="M5.500 15a4.500 4.500 0 0 1-.5-9 6 6 0 0 1 11-.8 4.900 4.900 0 0 1 .5 9.800z" fill="#9b5ba4" /><path d="m7.500 13.500 6-6" stroke="#e9ddee" strokeWidth="2" /><path d="M13 13.500h4" stroke="#e9ddee" strokeWidth="1.200" /></svg>) },
  { name: "Command Prompt", open: true, art: <Cmd /> },
  { name: "AutoCAD", art: (
    <svg width="23" height="23" viewBox="0 0 23 23"><rect width="23" height="23" fill="#f3e4e1" /><path d="M3.500 19.500 9.500 3h4.500l6 16.500-4 1-1.200-4H8.500l-1.200 3.500zM9.500 13h4.300l-2.200-6.500z" fill="#b5231f" fillRule="evenodd" /><path d="M9.500 3h2L6.500 19.800l-3-.3z" fill="#e0605a" /></svg>) },
  { name: "Command Prompt 2", art: <Cmd /> },
  { name: "Dynamo", open: true, art: (
    <svg width="23" height="23" viewBox="0 0 23 23"><rect width="23" height="23" fill="#e4ecf4" /><path d="M6 3.500h5.500c5 0 7.500 3 7.500 7.800S16 19.500 11 19.500H6zM10 7v9c3.500.3 5-1.300 5-4.600S13.500 6.800 10 7z" fill="#2465a8" fillRule="evenodd" /><path d="M6 3.500 10 7v9l-4 3.500z" fill="#4a90cf" /></svg>) },
  { name: "Word", open: true, art: (
    <svg width="22" height="22" viewBox="0 0 22 22"><rect x="10" y="3" width="11" height="16" fill="#fff" stroke="#2b5797" /><path d="M12.500 6.500h7M12.500 9h7M12.500 11.500h7M12.500 14h7M12.500 16.500h7" stroke="#2b5797" /><path d="M1 3.500 13 1v20L1 18.500z" fill="#2b5797" /><path d="m3.500 8 1.500 6.500L7 8.500l2 6L10.500 8" fill="none" stroke="#fff" strokeWidth="1.300" /></svg>) },
  { name: "Notepad", open: true, art: (
    <svg width="22" height="22" viewBox="0 0 22 22"><path d="m7 2.500 13 1-3 15.500-15.500-1.500z" fill="#62aebd" /><path d="M7 2.500 20 3.500l-1.500 7L4 12z" fill="#9fd6df" /><path d="m20 3.500-3 15.500 3.500-4 .8-10z" fill="#e9e2cf" /><path d="m1.500 17.500 15.500 1.500 1.200 1.200L3 19z" fill="#d8cfae" /><path d="m7 2.300 13 1" stroke="#5b7f8a" strokeDasharray="1 1" /></svg>) },
];

const menu: [string, number, boolean][] = [
  ["File", 35, true], ["Edit", 36, true], ["View", 40, true], ["Packages", 57, true], ["Settings", 52, true], ["Help", 39, false],
];

const categories = ["Formula", "Input", "List", "Logic", "Math", "Object", "Scripting", "String", "Thread", "TimeSpan", "Units", "View"];

/* ----------------------------------------------------------------- app */

export default function App() {
  return (
    <Shell>
      <GlobalStyle />
      <TitleBar>
        <svg width="9" height="11" viewBox="0 0 9 11"><rect width="9" height="11" fill="#dfeaf5" /><path d="M1.500 1.500H4c3 0 4 1.500 4 4s-1.200 4-4 4H1.500zM3.500 3.500v4c2 .2 2.700-.5 2.700-2s-.7-2.200-2.700-2z" fill="#2467a9" fillRule="evenodd" /></svg>
        <AppTitle>Autodesk Dynamo Studio</AppTitle>
        <WindowButton aria-label="Minimize"><svg width="7" height="3"><rect x=".5" y=".5" width="6" height="2" fill="#fff" stroke="#5e7188" strokeWidth=".6" /></svg></WindowButton>
        <WindowButton aria-label="Restore"><svg width="8" height="8" viewBox="0 0 8 8" fill="none" stroke="#4f6075" strokeWidth=".6"><rect x="2.500" y=".5" width="5" height="4.500" fill="#fff" /><rect x=".5" y="2.800" width="5" height="4.500" fill="#fff" /><rect x="2" y="4.300" width="2" height="1.500" fill="#8ba5c3" /></svg></WindowButton>
        <WindowButton $close aria-label="Close"><svg width="7" height="6" viewBox="0 0 7 6"><path d="m1 .5 5 5M6 .5l-5 5" stroke="#fff" strokeWidth="1.800" /></svg></WindowButton>
      </TitleBar>

      <MenuBar>
        {menu.map(([label, w, key]) => (
          <MenuItem key={label} $w={w}>{key ? <><u>{label[0]}</u>{label.slice(1)}</> : label}</MenuItem>
        ))}
        <MenuItem $w={12} aria-label="Notifications">
          <svg width="11" height="11" viewBox="0 0 11 11"><circle cx="5.500" cy="5.500" r="5.300" fill="#e8e8e8" /><path d="M5.500 2v4.500M5.500 7.500V9" stroke="#333" strokeWidth="1.700" /></svg>
        </MenuItem>
      </MenuBar>

      <ToolBar>
        <ToolButton aria-label="New"><svg width="11" height="13" viewBox="0 0 11 13"><path d="M.5.5h6v4h4v8H.5zM7.300.5l3.200 3.200H7.300z" fill="#7d7d7d" /></svg></ToolButton>
        <ToolButton aria-label="Open"><svg width="14" height="13" viewBox="0 0 14 13"><path d="M4 6V.5h4.500L11.500 3v3M0 6.500h3V6l1.500 1H13l-2 5.500H1.500V9H0z" fill="#7d7d7d" /></svg></ToolButton>
        <ToolButton aria-label="Save"><svg width="12" height="12" viewBox="0 0 12 12" fill="none" stroke="#7d7d7d" strokeWidth="1.500"><path d="M.8.8h10.400v10.400H.8zM3.500 1v3.500h5V1M3 11V7h6v4" /></svg></ToolButton>
        <ToolButton aria-label="Undo"><svg width="14" height="11" viewBox="0 0 14 11"><path d="M0 4 5 0v2.500c5 0 7.500 3 8 7.500-1.500-3-4-4.500-8-4.500V8z" fill="#7a7a7a" /></svg></ToolButton>
        <ToolButton aria-label="Redo"><svg width="14" height="11" viewBox="0 0 14 11"><path d="M14 4 9 0v2.500c-5 0-7.500 3-8 7.500 1.500-3 4-4.500 8-4.500V8z" fill="#474747" /></svg></ToolButton>
        <Spacer />
        <ToolButton aria-label="Export image"><svg width="15" height="11" viewBox="0 0 15 11"><path d="M1 2h3.500L5.500.5h4L10.500 2H14q1 0 1 1v7q0 1-1 1H1q-1 0-1-1V3q0-1 1-1z" fill="#7d7d7d" /><circle cx="7.500" cy="6.300" r="3" fill="#343434" /><circle cx="7.500" cy="6.300" r="1.700" fill="#7d7d7d" /></svg></ToolButton>
        <Account href="#account">
          <svg width="12" height="12" viewBox="0 0 12 12"><circle cx="6" cy="6" r="5.700" fill="#efefef" /><circle cx="6" cy="4.800" r="2.500" fill="#a9a9a9" /><path d="M2.300 10.200C3 8 4.500 7.800 6 7.800s3 .2 3.700 2.400A5.700 5.700 0 0 1 2.300 10.200z" fill="#a9a9a9" /></svg>
          kean.walmsley@autodesk.com
        </Account>
      </ToolBar>

      <Main>
        <Sidebar>
          <LibraryHeader>
            <LibraryTitle>Library</LibraryTitle>
            <HeaderButton aria-label="Filter"><svg width="12" height="8" viewBox="0 0 12 8"><path d="M.5 0v8" stroke="#6a6a6a" /><path d="M4 1h8L9 4.500V8L7 6.500v-2z" fill="#434343" /></svg></HeaderButton>
            <HeaderButton aria-label="Layout"><svg width="12" height="8" viewBox="0 0 12 8"><path d="M.5 0v8" stroke="#6a6a6a" /><path d="M5 2h7M5 4.500h7M5 7h7" stroke="#3b3b3b" /></svg></HeaderButton>
            <HeaderButton aria-label="Collapse"><svg width="12" height="8" viewBox="0 0 12 8"><path d="M.5 0v8M10.500 0v8" stroke="#777" /><path d="M9 0v8L4 4z" fill="#8a8a8a" /></svg></HeaderButton>
          </LibraryHeader>
          <SearchLabel>
            <svg width="10" height="10" viewBox="0 0 10 10" fill="none" stroke="#686868"><circle cx="4" cy="4" r="2.900" strokeWidth="1.400" /><path d="m6.200 6.200 3 3" strokeWidth="1.900" /></svg>
            <SearchInput placeholder="Search" aria-label="Search" />
          </SearchLabel>
          <Tree>
            {categories.map((c) => (
              <TreeItem key={c}><Tick /><TreeButton><Caret open={c === "View"} />{c}</TreeButton></TreeItem>
            ))}
          </Tree>
          <Leaves>
            <svg width="14" height="22" viewBox="0 0 14 22"><path d="M7 4v14M0 11h14" stroke="#7fa62b" strokeWidth="4" /></svg>
            <LeafList>
              <Leaf><LeafButton><Glasses kind="text" />Watch</LeafButton></Leaf>
              <Leaf><LeafButton><Glasses kind="3d" />Watch 3D</LeafButton></Leaf>
              <Leaf><LeafButton><Glasses kind="image" />Watch Image</LeafButton></Leaf>
            </LeafList>
          </Leaves>
          <Stub><Elbow /><TreeButton><Caret />Web</TreeButton></Stub>
          <Stub><Elbow /><TreeButton $dim><Caret />File</TreeButton></Stub>
          <Packages>
            {["Display", "DynamoHue", "DynamoUnits"].map((p) => (
              <PackageItem key={p}><TreeButton $dim><Caret />{p}</TreeButton></PackageItem>
            ))}
          </Packages>
        </Sidebar>

        <WorkArea>
          <TabBar>
            <Tab>
              Adelboden - write.dyn*
              <button aria-label="Close tab"><svg width="7" height="7" viewBox="0 0 7 7"><path d="m.5.5 6 6M6.500.5l-6 6" stroke="#7a7a7a" /></svg></button>
            </Tab>
            <TabMenu aria-label="Tabs"><svg width="8" height="8" viewBox="0 0 8 8"><path d="M0 1h8M0 4h8M0 7h8" stroke="#7a7a7a" /></svg></TabMenu>
          </TabBar>
          <Canvas>
            <Graph />
            <ViewTools>
              <ToolCard $row>
                <ViewButton $wide aria-label="Geometry view">
                  <svg width="26" height="11" viewBox="0 0 26 11" fill="none" stroke="#7c7c7c" strokeWidth=".9"><circle cx="4.500" cy="6" r="4" /><path d="M4 8.500 9.500.8l4.500 7.700zM17 3.500h6v6.500h-6zM17 3.500 19.500.8h6L23 3.500M25.500.8v6.500L23 10" /></svg>
                </ViewButton>
                <ViewButton $wide aria-label="Graph view">
                  <svg width="27" height="11" viewBox="0 0 27 11" fill="#8ecbfa" stroke="#2d9cf4" strokeWidth="1"><rect x=".5" y="1" width="7" height="3.500" /><rect x="4.500" y="7" width="6.500" height="3" /><rect x="18" y="2.500" width="8.500" height="5" /><path d="M.5 1.500h7M4.500 7.500H11M18 3.200h8.500" strokeWidth="1.500" /><path d="M8 2.500c4 0 5 3 10 2.500M11 8.500c3 0 4-3 7-3" fill="none" strokeWidth=".7" /></svg>
                </ViewButton>
              </ToolCard>
              <ToolCard>
                <ViewButton aria-label="Fit"><svg width="9" height="9" viewBox="0 0 9 9" fill="none" stroke="#6c6c6c" strokeWidth="1.300"><path d="M.7 3V.7H3M6 .7h2.300V3M8.300 6v2.300H6M3 8.300H.7V6" /></svg></ViewButton>
                <ViewButton aria-label="Zoom in"><svg width="7" height="7" viewBox="0 0 7 7"><path d="M3.500 0v7M0 3.500h7" stroke="#6c6c6c" strokeWidth="1.400" /></svg></ViewButton>
                <ViewButton aria-label="Zoom out"><svg width="7" height="2"><path d="M0 1h7" stroke="#6c6c6c" strokeWidth="1.400" /></svg></ViewButton>
              </ToolCard>
              <ToolCard>
                <ViewButton aria-label="Pan"><svg width="11" height="11" viewBox="0 0 11 11"><path d="M5.500 1v9M1 5.500h9" stroke="#1f95f2" strokeWidth="1.700" /><path d="M5.500 0 7.900 2.900H3.100zM5.500 11l2.400-2.900H3.100zM0 5.500l2.900-2.400v4.800zM11 5.500 8.100 3.100v4.800z" fill="#1f95f2" /></svg></ViewButton>
              </ToolCard>
            </ViewTools>
          </Canvas>
        </WorkArea>
      </Main>

      <Console>
        <p>Saving C:\Users\walmslk\AppData\Roaming\Dynamo\Dynamo Core\backup\Adelboden - write.dyn ...</p>
        <p>Backup file is saved: C:\Users\walmslk\AppData\Roaming\Dynamo\Dynamo Core\backup\Adelboden - write.dyn</p>
        <Grip />
      </Console>

      <RunBar>
        <SelectWrap>
          <RunMode aria-label="Run mode"><option>Periodic</option><option>Automatic</option><option>Manual</option></RunMode>
          <svg width="5" height="4" viewBox="0 0 5 4"><path d="M0 .5h5L2.500 3.500z" fill="#b5b5b5" /></svg>
        </SelectWrap>
        <Interval>1000ms</Interval>
        <RunStatus>Run completed.</RunStatus>
      </RunBar>

      <TaskBar>
        <StartButton aria-label="Start">
          <svg width="18" height="18" viewBox="0 0 18 18">
            <defs><radialGradient id="orb" cy=".75"><stop stopColor="#4fb8e8" /><stop offset="1" stopColor="#1c4a7c" /></radialGradient></defs>
            <circle cx="9" cy="9" r="8.700" fill="url(#orb)" />
            <path d="M3.500 5.500q2.500-1.500 5 0l-.8 3.500q-2.500-1.200-5 .2z" fill="#ee6a33" /><path d="M9.300 5.500q2.500 1.500 5.200.2l-1 3.500q-2.500 1.300-5 0z" fill="#9ccb3c" />
            <path d="M2.600 10q2.500-1.300 5 0l-.9 3.500q-2-1.200-4 0z" fill="#4aa5e2" /><path d="M8.300 10q2.500 1.400 5 .2l-1 3.500q-2.500 1.200-4.800 0z" fill="#f6cb3d" />
          </svg>
        </StartButton>
        <Dock>
          {DockIcons.map((d) => (
            <DockItem key={d.name} aria-label={d.name} $open={d.open} $active={d.active}>{d.art}</DockItem>
          ))}
        </Dock>
        <Tray>
          <TrayButton aria-label="Hidden icons"><svg width="5" height="3"><path d="M0 3h5L2.500 0z" fill="#fff" /></svg></TrayButton>
          <TrayButton aria-label="Battery"><svg width="8" height="11" viewBox="0 0 8 11"><rect x="1" y="1.500" width="6" height="9" rx="1" fill="none" stroke="#fff" /><path d="M3 .7h2" stroke="#fff" /><path d="M2.500 5h3v4h-3z" fill="#fff" /></svg></TrayButton>
          <TrayButton aria-label="OneDrive"><svg width="12" height="8" viewBox="0 0 12 8"><path d="M2.500 7.500a2 2 0 0 1 0-4 3.500 3.500 0 0 1 6.500-.3 2.200 2.200 0 0 1 1 4.300z" fill="#fff" /></svg></TrayButton>
          <TrayButton aria-label="Network"><svg width="11" height="10" viewBox="0 0 11 10" fill="none" stroke="#fff"><path d="M3 2.500h7.500V7H3zM5 9.500h4M1.500.5v9M0 1h3.500" /></svg></TrayButton>
          <TrayButton aria-label="Volume"><svg width="11" height="10" viewBox="0 0 11 10"><path d="M0 3.500h2L5.500.5v9L2 6.500H0z" fill="#fff" /><path d="M7 3.500q1 1.500 0 3M9 2q2 3 0 6" fill="none" stroke="#c5d2e2" strokeWidth=".8" /></svg></TrayButton>
          <Clock>7:55 PM<br />2/2/2018</Clock>
          <ShowDesktop aria-label="Show desktop" />
        </Tray>
      </TaskBar>
    </Shell>
  );
}
